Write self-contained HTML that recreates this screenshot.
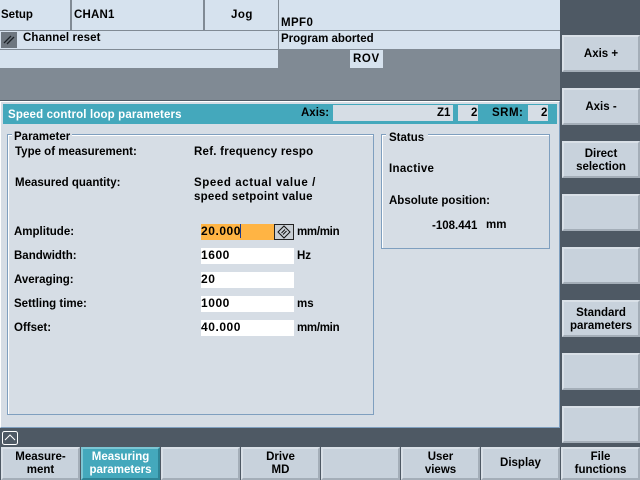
<!DOCTYPE html>
<html><head><meta charset="utf-8"><style>
html,body{margin:0;padding:0}
body{width:640px;height:480px;position:relative;overflow:hidden;background:#4e5964;font:bold 11.5px/14px "Liberation Sans",sans-serif;color:#000}
.a,.t,.sk{position:absolute}
.t{white-space:nowrap;font-size:11.5px;line-height:14px}
.sk{box-sizing:border-box;background:#c8d2dc;border:2px solid;border-color:#d9e0e7 #a4aeb8 #a4aeb8 #d9e0e7;text-align:center;display:flex;align-items:center;justify-content:center;font-size:11.5px;line-height:13px}
.r{left:562px;width:78px;height:37px;padding-top:2px}
.b{top:447px;width:79px;height:33px}
.f{position:absolute;left:201px;width:93px;height:16px;background:#fff}
.v{left:201px;font-size:12px;letter-spacing:.55px}
</style></head><body>
<div class="a" style="left:0;top:0;width:560px;height:100px;background:#808a94"></div>
<div class="a" style="left:0;top:0;width:278px;height:68px;background:#d6e2ee"></div>
<div class="a" style="left:278px;top:0;width:282px;height:49px;background:#d6e2ee"></div>
<div class="a" style="left:70px;top:0;width:2px;height:30px;background:#808a94"></div>
<div class="a" style="left:203px;top:0;width:2px;height:30px;background:#808a94"></div>
<div class="a" style="left:278px;top:0;width:1px;height:49px;background:#808a94"></div>
<div class="a" style="left:0;top:30px;width:560px;height:1px;background:#808a94"></div>
<div class="a" style="left:0;top:49px;width:278px;height:1px;background:#808a94"></div>
<div class="a" style="left:1px;top:32px;width:16px;height:16px;background:#6e7780"></div>
<svg class="a" style="left:1px;top:32px" width="16" height="16"><path d="M3 11L10 4M6 12L13 5" stroke="#1c2228" stroke-width="1.3" fill="none"/></svg>
<div class="t" style="left:1px;top:8px">Setup</div>
<div class="t" style="left:74px;top:8px;letter-spacing:.2px">CHAN1</div>
<div class="t" style="left:231px;top:8px;letter-spacing:.5px">Jog</div>
<div class="t" style="left:281px;top:16px;letter-spacing:.4px">MPF0</div>
<div class="t" style="left:23px;top:31px;letter-spacing:.12px">Channel reset</div>
<div class="t" style="left:281px;top:32px">Program aborted</div>
<div class="a" style="left:350px;top:50px;width:33px;height:18px;background:#d6e2ee"></div>
<div class="t" style="left:353px;top:52px;letter-spacing:.6px">ROV</div>

<div class="a" style="left:0;top:100px;width:560px;height:1px;background:#4e5964"></div>
<div class="a" style="box-sizing:border-box;left:0;top:101px;width:560px;height:327px;background:#d6dde5;border:1px solid #7f9fbf;border-left-color:#fff;border-top-color:#fff"></div>
<div class="a" style="left:3px;top:104px;width:554px;height:20px;background:#44a8bc"></div>
<div class="t" style="left:8px;top:108px;color:#fff;letter-spacing:.15px">Speed control loop parameters</div>
<div class="t" style="left:301px;top:106px">Axis:</div>
<div class="a" style="left:333px;top:105px;width:120px;height:16px;background:#d6dde5"></div>
<div class="t" style="left:437px;top:106px">Z1</div>
<div class="a" style="left:458px;top:105px;width:20px;height:16px;background:#d6dde5"></div>
<div class="t" style="left:471px;top:106px">2</div>
<div class="t" style="left:492px;top:106px;letter-spacing:.5px">SRM:</div>
<div class="a" style="left:528px;top:105px;width:20px;height:16px;background:#d6dde5"></div>
<div class="t" style="left:541px;top:106px">2</div>

<div class="a" style="box-sizing:border-box;left:7px;top:134px;width:367px;height:281px;border:1px solid #7f9fbf;box-shadow:inset 1px 1px 0 #fff"></div>
<div class="a" style="left:12px;top:130px;width:60px;height:10px;background:#d6dde5"></div>
<div class="t" style="left:14px;top:130px">Parameter</div>
<div class="t" style="left:15px;top:145px">Type of measurement:</div>
<div class="t" style="left:194px;top:145px;letter-spacing:.25px">Ref. frequency respo</div>
<div class="t" style="left:15px;top:176px">Measured quantity:</div>
<div class="t" style="left:194px;top:176px;letter-spacing:.6px">Speed actual value /</div>
<div class="t" style="left:194px;top:190px;letter-spacing:.25px">speed setpoint value</div>
<div class="t" style="left:14px;top:225px">Amplitude:</div>
<div class="t" style="left:14px;top:249px">Bandwidth:</div>
<div class="t" style="left:14px;top:273px">Averaging:</div>
<div class="t" style="left:14px;top:297px">Settling time:</div>
<div class="t" style="left:14px;top:321px">Offset:</div>

<div class="a" style="left:201px;top:224px;width:73px;height:16px;background:#ffb444"></div>
<div class="a" style="left:240px;top:224px;width:1px;height:14px;background:#1a3a90"></div>
<div class="a" style="box-sizing:border-box;left:274px;top:224px;width:20px;height:16px;background:#c8ced4;border:1px solid #222"></div>
<svg class="a" style="left:274px;top:224px" width="20" height="16"><path d="M10 2L16 8L10 14L4 8Z" stroke="#111" fill="none"/><path d="M7.5 9L11 5.5M9 10.5L12.5 7" stroke="#111" fill="none"/></svg>
<div class="f" style="top:248px"></div>
<div class="f" style="top:272px"></div>
<div class="f" style="top:296px"></div>
<div class="f" style="top:320px"></div>
<div class="t v" style="top:224px">20.000</div>
<div class="t v" style="top:248px">1600</div>
<div class="t v" style="top:272px">20</div>
<div class="t v" style="top:296px">1000</div>
<div class="t v" style="top:320px">40.000</div>
<div class="t" style="left:297px;top:225px;letter-spacing:-.3px">mm/min</div>
<div class="t" style="left:297px;top:249px">Hz</div>
<div class="t" style="left:297px;top:297px">ms</div>
<div class="t" style="left:297px;top:321px;letter-spacing:-.3px">mm/min</div>

<div class="a" style="box-sizing:border-box;left:381px;top:134px;width:169px;height:115px;border:1px solid #7f9fbf;box-shadow:inset 1px 1px 0 #fff"></div>
<div class="a" style="left:386px;top:130px;width:42px;height:10px;background:#d6dde5"></div>
<div class="t" style="left:389px;top:131px">Status</div>
<div class="t" style="left:389px;top:162px;letter-spacing:.3px">Inactive</div>
<div class="t" style="left:389px;top:194px">Absolute position:</div>
<div class="t" style="left:432px;top:219px">-108.441</div>
<div class="t" style="left:486px;top:218px">mm</div>

<svg class="a" style="left:2px;top:431px" width="17" height="14"><rect x=".5" y=".5" width="15" height="13" rx="2" fill="none" stroke="#fff"/><path d="M3 9L8 4L13 9" fill="none" stroke="#fff"/></svg>

<div class="sk r" style="top:35px">Axis +</div>
<div class="sk r" style="top:88px">Axis -</div>
<div class="sk r" style="top:141px">Direct<br>selection</div>
<div class="sk r" style="top:194px"></div>
<div class="sk r" style="top:247px"></div>
<div class="sk r" style="top:300px">Standard<br>parameters</div>
<div class="sk r" style="top:353px"></div>
<div class="sk r" style="top:406px"></div>

<div class="sk b" style="left:1px">Measure-<br>ment</div>
<div class="sk b" style="left:81px;background:#44a8bc;color:#fff;border-color:#7cc6d4 #2f8496 #2f8496 #7cc6d4">Measuring<br>parameters</div>
<div class="sk b" style="left:161px"></div>
<div class="sk b" style="left:241px">Drive<br>MD</div>
<div class="sk b" style="left:321px"></div>
<div class="sk b" style="left:401px">User<br>views</div>
<div class="sk b" style="left:481px">Display</div>
<div class="sk b" style="left:561px">File<br>functions</div>
</body></html>
